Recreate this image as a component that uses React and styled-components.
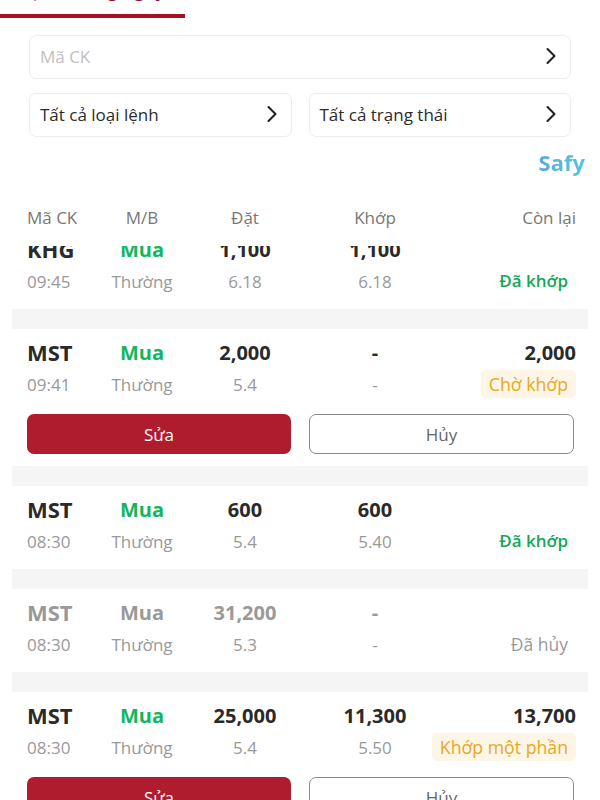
import React from 'react'
import styled, {createGlobalStyle} from 'styled-components'
import {ChevronRight} from 'lucide-react'

const COLUMNS = '73px 84px 122px 138px minmax(0, 1fr)'

const Global = createGlobalStyle`
	html, body {
		margin: 0;
		padding: 0;
		background: #fff;
	}
	body {
		font-family: 'Open Sans', 'Noto Sans', sans-serif;
	}
`
const Page = styled.div`
	width: 600px;
	height: 800px;
	overflow: hidden;
	background: #fff;
	display: flex;
	flex-direction: column;
`
const Tabs = styled.div`
	height: 18px;
	flex: none;
	overflow: hidden;
`
const TabLabels = styled.div`
	display: flex;
	height: 14px;
	align-items: flex-start;
	overflow: hidden;
`
const TabLabel = styled.div`
	width: 185px;
	text-align: center;
	font-size: 18px;
	line-height: 26px;
	height: 26px;
	margin-top: -23px;
	flex: none;
	font-weight: ${props => (props.$active ? 700 : 400)};
	color: ${props => (props.$active ? '#8f1026' : '#333')};
	white-space: nowrap;
`
const TabBar = styled.div`
	width: 185px;
	height: 4px;
	background: #a50f25;
`
const Filters = styled.div`
	padding: 17px 29px 0;
	display: grid;
	grid-template-columns: 1fr 1fr;
	gap: 14px 17px;
	flex: none;
`
const Field = styled.div`
	height: 44px;
	box-sizing: border-box;
	border: 1px solid #ececec;
	border-radius: 7px;
	padding: 0 5px 2px 10px;
	display: flex;
	align-items: center;
	justify-content: space-between;
	font-size: 17px;
	color: ${props => (props.$muted ? '#c0c0c0' : '#2b2b2b')};
	grid-column: ${props => (props.$wide ? '1 / 3' : 'auto')};
	svg {
		color: #222;
	}
`
const Safy = styled.div`
	margin-top: 11px;
	padding-right: 15px;
	text-align: right;
	font-size: 22px;
	line-height: 29px;
	font-weight: 700;
	flex: none;
	span {
		background: linear-gradient(90deg, #5aa9d8, #55c8d8);
		-webkit-background-clip: text;
		background-clip: text;
		color: transparent;
	}
`
const Head = styled.div`
	display: grid;
	grid-template-columns: ${COLUMNS};
	padding: 0 24px 0 27px;
	margin-top: 29px;
	font-size: 17px;
	line-height: 24px;
	color: #777;
	flex: none;
	height: 24px;
`
const Cell = styled.div`
	text-align: ${props => props.$align || 'center'};
	white-space: nowrap;
`
const StatusCell = styled.div`
	display: flex;
	justify-content: flex-end;
	white-space: nowrap;
`
const List = styled.div`
	flex: 1;
	min-height: 0;
	overflow: hidden;
	margin-top: 16px;
	background: #fff;
`
const Scroller = styled.div`
	margin-top: -20px;
	padding: 0 12px;
	display: flex;
	flex-direction: column;
`
const Order = styled.div`
	background: #fff;
	border-radius: 6px;
	padding: 8px 12px 11px 15px;
`
const Divider = styled.div`
	height: 20px;
	background: #f5f5f5;
	flex: none;
`
const Row = styled.div`
	display: grid;
	grid-template-columns: ${COLUMNS};
	align-items: center;
	height: ${props => (props.$sub ? '34px' : '30px')};
`
const Sym = styled(Cell)`
	font-size: 22px;
	font-weight: 700;
	color: ${props => props.$color || '#2a2a2a'};
`
const Side = styled(Cell)`
	font-size: 20px;
	font-weight: 700;
	color: ${props => props.$color || '#12b65e'};
`
const Qty = styled(Cell)`
	font-size: 20px;
	font-weight: 700;
	color: ${props => props.$color || '#2a2a2a'};
`
const Sub = styled(Cell)`
	font-size: 17px;
	color: #999;
`
const Status = styled.span`
	display: inline-block;
	font-size: ${props => (props.$kind === 'wait' ? '17.7px' : props.$kind === 'done' ? '17px' : '17.5px')};
	font-weight: ${props => (props.$kind === 'done' ? 600 : props.$kind === 'wait' ? 500 : 400)};
	line-height: 28px;
	padding: ${props => (props.$kind === 'wait' ? '0 8px' : '0 8px 0 0')};
	border-radius: 5px;
	color: ${props =>
		props.$kind === 'done' ? '#12a85a' : props.$kind === 'wait' ? '#e8a81e' : '#999'};
	background: ${props => (props.$kind === 'wait' ? '#fdf5e6' : 'transparent')};
`
const Actions = styled.div`
	display: grid;
	grid-template-columns: 264px 1fr;
	gap: 18px;
	margin: 13px 0 1px;
`
const Edit = styled.div`
	height: 40px;
	border-radius: 7px;
	background: #ae1c2e;
	color: #fff;
	font-size: 17px;
	font-weight: 500;
	display: flex;
	align-items: center;
	justify-content: center;
`
const Cancel = styled(Edit)`
	background: #fff;
	box-sizing: border-box;
	border: 1.5px solid #8a8a8a;
	color: #666;
	font-weight: 400;
	margin-right: 2px;
`

const orders = [
	{sym: 'KHG', time: '09:45', qty: '1,100', price: '6.18', match: '1,100', matchPrice: '6.18', status: 'Đã khớp', kind: 'done'},
	{sym: 'MST', time: '09:41', qty: '2,000', price: '5.4', match: '-', matchPrice: '-', left: '2,000', status: 'Chờ khớp', kind: 'wait', actions: true},
	{sym: 'MST', time: '08:30', qty: '600', price: '5.4', match: '600', matchPrice: '5.40', status: 'Đã khớp', kind: 'done'},
	{sym: 'MST', time: '08:30', qty: '31,200', price: '5.3', match: '-', matchPrice: '-', status: 'Đã hủy', kind: 'cancel', muted: true},
	{sym: 'MST', time: '08:30', qty: '25,000', price: '5.4', match: '11,300', matchPrice: '5.50', left: '13,700', status: 'Khớp một phần', kind: 'wait', actions: true}
]

const App = () => (
	<Page>
		<Global />
		<Tabs>
			<TabLabels>
				<TabLabel $active>Lệnh trong ngày</TabLabel>
				<TabLabel>Lịch sử lệnh</TabLabel>
				<TabLabel>Lệnh điều kiện</TabLabel>
			</TabLabels>
			<TabBar />
		</Tabs>
		<Filters>
			<Field $wide $muted>
				Mã CK
				<ChevronRight size={28} strokeWidth={1.8} />
			</Field>
			<Field>
				Tất cả loại lệnh
				<ChevronRight size={28} strokeWidth={1.8} />
			</Field>
			<Field>
				Tất cả trạng thái
				<ChevronRight size={28} strokeWidth={1.8} />
			</Field>
		</Filters>
		<Safy><span>Safy</span></Safy>
		<Head>
			<Cell $align="left">Mã CK</Cell>
			<Cell>M/B</Cell>
			<Cell>Đặt</Cell>
			<Cell>Khớp</Cell>
			<Cell $align="right">Còn lại</Cell>
		</Head>
		<List>
			<Scroller>
				{orders.map((o, i) => {
					const muted = o.muted ? '#999' : undefined
					return (
						<React.Fragment key={i}>
							{i > 0 && <Divider />}
							<Order>
								<Row>
									<Sym $align="left" $color={muted}>{o.sym}</Sym>
									<Side $color={muted}>Mua</Side>
									<Qty $color={muted}>{o.qty}</Qty>
									<Qty $color={muted}>{o.match}</Qty>
									<Qty $align="right">{o.left}</Qty>
								</Row>
								<Row $sub>
									<Sub $align="left">{o.time}</Sub>
									<Sub>Thường</Sub>
									<Sub>{o.price}</Sub>
									<Sub>{o.matchPrice}</Sub>
									<StatusCell><Status $kind={o.kind}>{o.status}</Status></StatusCell>
								</Row>
								{o.actions && (
									<Actions>
										<Edit>Sửa</Edit>
										<Cancel>Hủy</Cancel>
									</Actions>
								)}
							</Order>
						</React.Fragment>
					)
				})}
			</Scroller>
		</List>
	</Page>
)

export default App
